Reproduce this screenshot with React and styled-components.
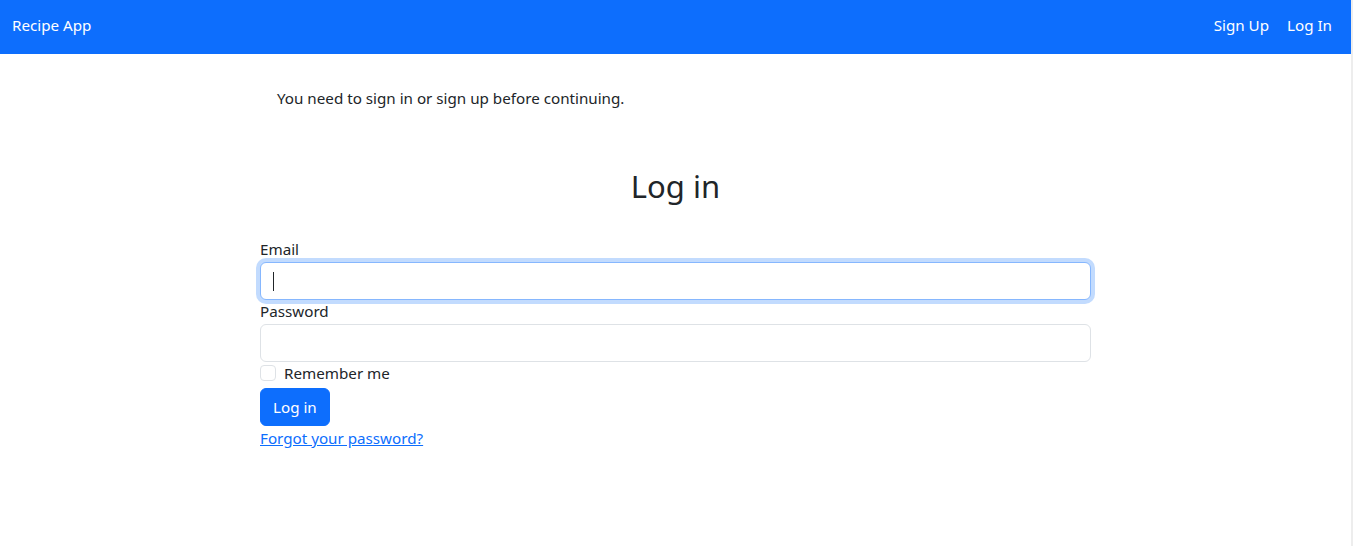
import React from "react";
import styled, { createGlobalStyle } from "styled-components";

const GlobalStyle = createGlobalStyle`
  html, body {
    margin: 0;
    padding: 0;
    background: #fff;
  }
  body {
    font-family: "Noto Sans", "Liberation Sans", sans-serif;
    font-size: 15.2px;
    line-height: 24px;
    color: #212529;
  }
  * {
    box-sizing: border-box;
  }
`;

const Page = styled.div`
  min-height: 546px;
  border-right: 2px solid #ededed;
`;

const Navbar = styled.nav`
  height: 54px;
  background: #0d6efd;
  display: flex;
  align-items: center;
  justify-content: space-between;
  padding: 0 19px 4px 12px;
`;

const Brand = styled.a`
  color: #fff;
  text-decoration: none;
`;

const NavLinks = styled.div`
  display: flex;
  gap: 18px;
`;

const NavLink = styled.a`
  color: #fff;
  text-decoration: none;
`;

const Container = styled.main`
  width: 831px;
  margin: 0 auto;
  padding-top: 28px;
`;

const Notice = styled.p`
  margin: 0;
  padding: 4px 17px;
`;

const Title = styled.h2`
  margin: 54px 0 33px;
  text-align: center;
  font-size: 31px;
  font-weight: 400;
  line-height: 1.2;
`;

const Field = styled.div`
  display: flex;
  flex-direction: column;
`;

const Label = styled.label`
  line-height: 24px;
  margin-top: -1px;
  margin-bottom: 1px;
`;

const InputWrap = styled.div`
  position: relative;
`;

const Input = styled.input`
  display: block;
  width: 100%;
  height: 38px;
  padding: 6px 12px;
  font: inherit;
  border: 1px solid ${(p) => (p.$focused ? "#86b7fe" : "#dee2e6")};
  border-radius: 6px;
  outline: none;
  box-shadow: ${(p) =>
    p.$focused ? "0 0 0 4px rgba(13, 110, 253, 0.25)" : "none"};
  caret-color: transparent;
`;

const Caret = styled.span`
  position: absolute;
  left: 13px;
  top: 10px;
  width: 1px;
  height: 19px;
  background: #212529;
`;

const CheckRow = styled.label`
  display: flex;
  align-items: center;
  gap: 8px;
  line-height: 24px;
  margin-top: -1px;
  margin-bottom: 1px;
`;

const Check = styled.span`
  width: 16px;
  height: 16px;
  border: 1px solid #dee2e6;
  border-radius: 4px;
  background: #fff;
`;

const Button = styled.button`
  margin-top: 2px;
  align-self: flex-start;
  height: 38px;
  padding: 0 12px;
  background: #0d6efd;
  color: #fff;
  font: inherit;
  border: 1px solid #0d6efd;
  border-radius: 6px;
`;

const Forgot = styled.a`
  display: inline-block;
  margin-top: -2px;
  color: #0d6efd;
  text-decoration: underline;
  line-height: 24px;
`;

export default function App() {
  return (
    <>
      <GlobalStyle />
      <Page>
        <Navbar>
          <Brand href="#">Recipe App</Brand>
          <NavLinks>
            <NavLink href="#">Sign Up</NavLink>
            <NavLink href="#">Log In</NavLink>
          </NavLinks>
        </Navbar>
        <Container>
          <Notice>You need to sign in or sign up before continuing.</Notice>
          <Title>Log in</Title>
          <Field>
            <Label>Email</Label>
            <InputWrap>
              <Input type="email" $focused />
              <Caret />
            </InputWrap>
            <Label>Password</Label>
            <Input type="password" />
            <CheckRow>
              <Check />
              Remember me
            </CheckRow>
            <Button>Log in</Button>
            <div>
              <Forgot href="#">Forgot your password?</Forgot>
            </div>
          </Field>
        </Container>
      </Page>
    </>
  );
}
